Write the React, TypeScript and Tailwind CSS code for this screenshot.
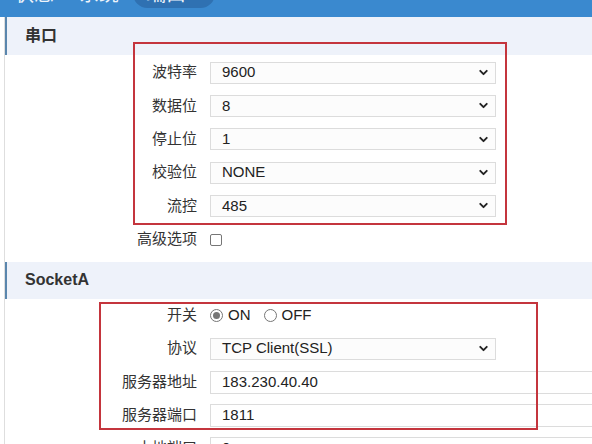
import type { JSX, ReactNode } from "react";
import { ChevronDown } from "lucide-react";

const FONT = { fontFamily: '"Liberation Sans", "Noto Sans CJK SC", sans-serif' };

const SERIAL_ROWS = [
  { label: "波特率", value: "9600" },
  { label: "数据位", value: "8" },
  { label: "停止位", value: "1" },
  { label: "校验位", value: "NONE" },
  { label: "流控", value: "485" },
];

const Row = ({ label, children }: { label: string; children: ReactNode }): JSX.Element => (
  <div className="flex h-[33.3px] items-center">
    <div className="w-[192px] shrink-0 text-right text-[15px] text-[#333]">{label}</div>
    <div className="ml-[13px] flex items-center">{children}</div>
  </div>
);

const FakeSelect = ({ value }: { value: string }): JSX.Element => (
  <div className="flex h-[22px] w-[286px] items-center justify-between border border-[#dcdcdc] bg-[#fcfcfc] pl-[11px] pr-[5px] text-[15px] text-[#222]">
    <span>{value}</span>
    <ChevronDown size={13} strokeWidth={3.5} className="text-[#222]" />
  </div>
);

const TextInput = ({ value }: { value: string }): JSX.Element => (
  <div className="flex h-[23px] w-[420px] items-center border border-[#dcdcdc] bg-white pl-[11px] text-[15px] text-[#222]">
    {value}
  </div>
);

const Radio = ({ checked, label }: { checked: boolean; label: string }): JSX.Element => (
  <span className="flex items-center gap-[5px]">
    <span className="flex h-[13px] w-[13px] items-center justify-center rounded-full border border-[#767676] bg-white">
      {checked && <span className="h-[7px] w-[7px] rounded-full bg-[#767676]" />}
    </span>
    <span className="text-[15px] text-[#222]">{label}</span>
  </span>
);

const SectionHeader = ({ title, className }: { title: string; className: string }): JSX.Element => (
  <div className={`flex items-center border-l-2 border-[#5a86ad] bg-[#eef2fa] pl-[18px] text-[16px] font-bold text-[#333] ${className}`}>
    {title}
  </div>
);

export default function App(): JSX.Element {
  return (
    <div className="relative h-[444px] w-[592px] overflow-hidden bg-white" style={FONT}>
      {/* top nav, clipped at the top edge */}
      <div className="h-[17px] overflow-hidden bg-[#3a89cf]">
        <div className="-mt-[21px] flex items-center pl-[14px] text-[20px] text-[#eef4fb]">
          <span className="flex h-[29px] items-center">状态</span>
          <span className="ml-[25px] flex h-[29px] items-center">系统</span>
          <span className="ml-[14px] flex h-[29px] items-center rounded-full bg-[#2f71b2] pl-[13px] pr-[11px]">
            端口
            <span className="ml-[8px] text-[10px]">▼</span>
          </span>
        </div>
      </div>

      <div className="ml-[4px] border-l border-[#dedede]">
        <SectionHeader title="串口" className="h-[38px]" />
        <div className="pt-[1px]">
          {SERIAL_ROWS.map((r) => (
            <Row key={r.label} label={r.label}>
              <FakeSelect value={r.value} />
            </Row>
          ))}
          <Row label="高级选项">
            <span className="mt-[1px] h-[12px] w-[12px] rounded-[2px] border border-[#767676] bg-white" />
          </Row>
        </div>

        <SectionHeader title="SocketA" className="mt-[6px] h-[37px]" />
        <div>
          <Row label="开关">
            <div className="flex items-center gap-[13px]">
              <Radio checked label="ON" />
              <Radio checked={false} label="OFF" />
            </div>
          </Row>
          <Row label="协议">
            <FakeSelect value="TCP Client(SSL)" />
          </Row>
          <Row label="服务器地址">
            <TextInput value="183.230.40.40" />
          </Row>
          <Row label="服务器端口">
            <TextInput value="1811" />
          </Row>
          <Row label="本地端口">
            <TextInput value="0" />
          </Row>
        </div>
      </div>

      {/* annotation boxes drawn over the form */}
      <div className="pointer-events-none absolute left-[133px] top-[42px] h-[183px] w-[374px] border-2 border-[#c4353d]" />
      <div className="pointer-events-none absolute left-[99px] top-[302px] h-[128px] w-[439px] border-2 border-[#c4353d]" />
    </div>
  );
}
